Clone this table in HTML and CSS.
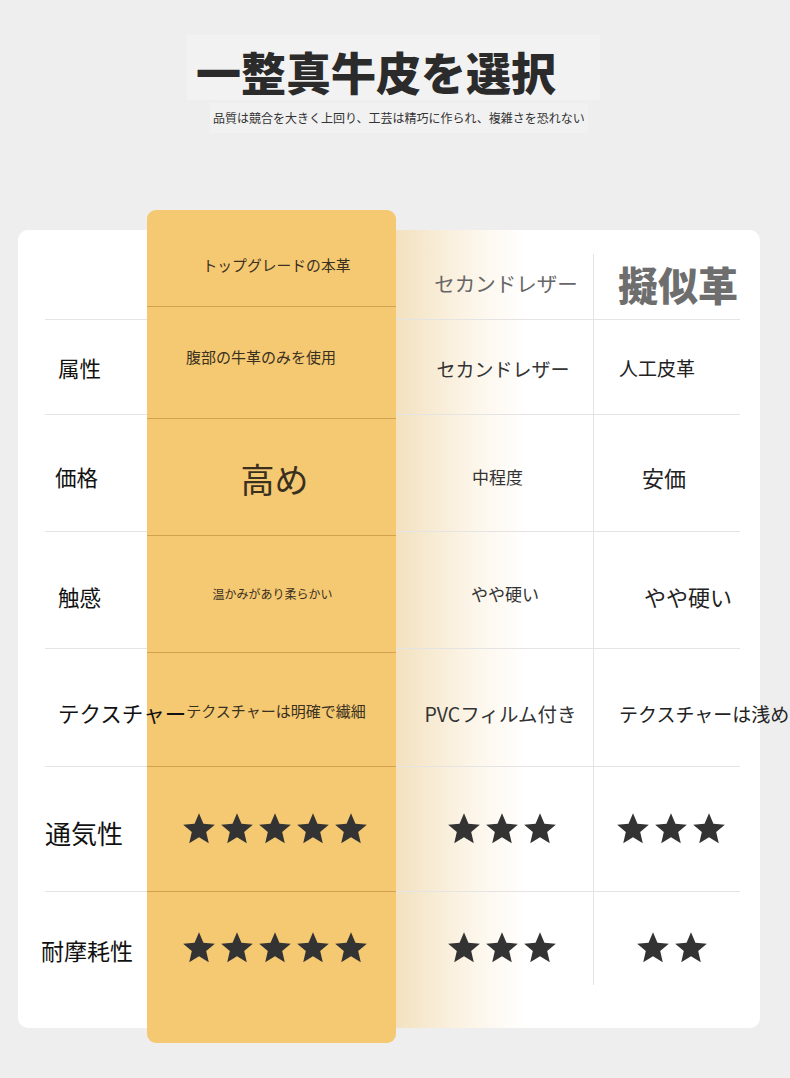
FILE: index.html
```html
<!DOCTYPE html>
<html lang="ja">
<head>
<meta charset="utf-8">
<title>一整真牛皮を選択</title>
<link rel="stylesheet" href="styles.css">
</head>
<body>
<div class="page">
  <header class="hero">
    <h1 class="title">一整真牛皮を選択</h1>
    <p class="subtitle">品質は競合を大きく上回り、工芸は精巧に作られ、複雑さを恐れない</p>
  </header>

  <section class="card">
    <div class="col col-label">
      <div class="cell h0"></div>
      <div class="cell h1 l1"><span class="label">属性</span></div>
      <div class="cell h2 l2"><span class="label">価格</span></div>
      <div class="cell h3 l3"><span class="label">触感</span></div>
      <div class="cell h4 l4"><span class="label">テクスチャー</span></div>
      <div class="cell h5 l5"><span class="label big">通気性</span></div>
      <div class="cell h6 last l6"><span class="label mid">耐摩耗性</span></div>
    </div>

    <div class="col col-top">
      <div class="tcell y0 t0"><span class="ttext">トップグレードの本革</span></div>
      <div class="tcell y1 t1"><span class="ttext">腹部の牛革のみを使用</span></div>
      <div class="tcell y2 t2"><span class="ttext huge">高め</span></div>
      <div class="tcell y3 t3"><span class="ttext small">温かみがあり柔らかい</span></div>
      <div class="tcell y4 t4"><span class="ttext">テクスチャーは明確で繊細</span></div>
      <div class="tcell y5 t5">
        <span class="stars">
          <svg class="star" viewBox="0 0 24 24"><path d="M12 17.27L18.18 21l-1.64-7.03L22 9.24l-7.19-.61L12 2 9.19 8.63 2 9.24l5.46 4.73L5.82 21z"/></svg>
          <svg class="star" viewBox="0 0 24 24"><path d="M12 17.27L18.18 21l-1.64-7.03L22 9.24l-7.19-.61L12 2 9.19 8.63 2 9.24l5.46 4.73L5.82 21z"/></svg>
          <svg class="star" viewBox="0 0 24 24"><path d="M12 17.27L18.18 21l-1.64-7.03L22 9.24l-7.19-.61L12 2 9.19 8.63 2 9.24l5.46 4.73L5.82 21z"/></svg>
          <svg class="star" viewBox="0 0 24 24"><path d="M12 17.27L18.18 21l-1.64-7.03L22 9.24l-7.19-.61L12 2 9.19 8.63 2 9.24l5.46 4.73L5.82 21z"/></svg>
          <svg class="star" viewBox="0 0 24 24"><path d="M12 17.27L18.18 21l-1.64-7.03L22 9.24l-7.19-.61L12 2 9.19 8.63 2 9.24l5.46 4.73L5.82 21z"/></svg>
        </span>
      </div>
      <div class="tcell y6 last t6">
        <span class="stars">
          <svg class="star" viewBox="0 0 24 24"><path d="M12 17.27L18.18 21l-1.64-7.03L22 9.24l-7.19-.61L12 2 9.19 8.63 2 9.24l5.46 4.73L5.82 21z"/></svg>
          <svg class="star" viewBox="0 0 24 24"><path d="M12 17.27L18.18 21l-1.64-7.03L22 9.24l-7.19-.61L12 2 9.19 8.63 2 9.24l5.46 4.73L5.82 21z"/></svg>
          <svg class="star" viewBox="0 0 24 24"><path d="M12 17.27L18.18 21l-1.64-7.03L22 9.24l-7.19-.61L12 2 9.19 8.63 2 9.24l5.46 4.73L5.82 21z"/></svg>
          <svg class="star" viewBox="0 0 24 24"><path d="M12 17.27L18.18 21l-1.64-7.03L22 9.24l-7.19-.61L12 2 9.19 8.63 2 9.24l5.46 4.73L5.82 21z"/></svg>
          <svg class="star" viewBox="0 0 24 24"><path d="M12 17.27L18.18 21l-1.64-7.03L22 9.24l-7.19-.61L12 2 9.19 8.63 2 9.24l5.46 4.73L5.82 21z"/></svg>
        </span>
      </div>
    </div>

    <div class="col col-mid">
      <div class="cell h0 m0"><span class="mtext head">セカンドレザー</span></div>
      <div class="cell h1 m1"><span class="mtext">セカンドレザー</span></div>
      <div class="cell h2 m2"><span class="mtext sm">中程度</span></div>
      <div class="cell h3 m3"><span class="mtext sm">やや硬い</span></div>
      <div class="cell h4 m4"><span class="mtext lg">PVCフィルム付き</span></div>
      <div class="cell h5 m5">
        <span class="stars">
          <svg class="star" viewBox="0 0 24 24"><path d="M12 17.27L18.18 21l-1.64-7.03L22 9.24l-7.19-.61L12 2 9.19 8.63 2 9.24l5.46 4.73L5.82 21z"/></svg>
          <svg class="star" viewBox="0 0 24 24"><path d="M12 17.27L18.18 21l-1.64-7.03L22 9.24l-7.19-.61L12 2 9.19 8.63 2 9.24l5.46 4.73L5.82 21z"/></svg>
          <svg class="star" viewBox="0 0 24 24"><path d="M12 17.27L18.18 21l-1.64-7.03L22 9.24l-7.19-.61L12 2 9.19 8.63 2 9.24l5.46 4.73L5.82 21z"/></svg>
        </span>
      </div>
      <div class="cell h6 last m6">
        <span class="stars">
          <svg class="star" viewBox="0 0 24 24"><path d="M12 17.27L18.18 21l-1.64-7.03L22 9.24l-7.19-.61L12 2 9.19 8.63 2 9.24l5.46 4.73L5.82 21z"/></svg>
          <svg class="star" viewBox="0 0 24 24"><path d="M12 17.27L18.18 21l-1.64-7.03L22 9.24l-7.19-.61L12 2 9.19 8.63 2 9.24l5.46 4.73L5.82 21z"/></svg>
          <svg class="star" viewBox="0 0 24 24"><path d="M12 17.27L18.18 21l-1.64-7.03L22 9.24l-7.19-.61L12 2 9.19 8.63 2 9.24l5.46 4.73L5.82 21z"/></svg>
        </span>
      </div>
    </div>

    <div class="col col-right">
      <div class="rlist">
        <div class="cell r0"><span class="rtext title-r">擬似革</span></div>
        <div class="cell h1 r1"><span class="rtext">人工皮革</span></div>
        <div class="cell h2 r2"><span class="rtext xl">安価</span></div>
        <div class="cell h3 r3"><span class="rtext xl">やや硬い</span></div>
        <div class="cell h4 r4"><span class="rtext">テクスチャーは浅め</span></div>
        <div class="cell h5 r5">
          <span class="stars">
            <svg class="star" viewBox="0 0 24 24"><path d="M12 17.27L18.18 21l-1.64-7.03L22 9.24l-7.19-.61L12 2 9.19 8.63 2 9.24l5.46 4.73L5.82 21z"/></svg>
            <svg class="star" viewBox="0 0 24 24"><path d="M12 17.27L18.18 21l-1.64-7.03L22 9.24l-7.19-.61L12 2 9.19 8.63 2 9.24l5.46 4.73L5.82 21z"/></svg>
            <svg class="star" viewBox="0 0 24 24"><path d="M12 17.27L18.18 21l-1.64-7.03L22 9.24l-7.19-.61L12 2 9.19 8.63 2 9.24l5.46 4.73L5.82 21z"/></svg>
          </span>
        </div>
        <div class="cell r6 last">
          <span class="stars two">
            <svg class="star" viewBox="0 0 24 24"><path d="M12 17.27L18.18 21l-1.64-7.03L22 9.24l-7.19-.61L12 2 9.19 8.63 2 9.24l5.46 4.73L5.82 21z"/></svg>
            <svg class="star" viewBox="0 0 24 24"><path d="M12 17.27L18.18 21l-1.64-7.03L22 9.24l-7.19-.61L12 2 9.19 8.63 2 9.24l5.46 4.73L5.82 21z"/></svg>
          </span>
        </div>
      </div>
    </div>
  </section>
</div>
</body>
</html>
```

FILE: styles.css
```css
* { box-sizing: border-box; }

html, body {
  margin: 0;
  padding: 0;
  background: #eeeeee;
}

body {
  font-family: "Noto Sans CJK JP", "Noto Sans", sans-serif;
  color: #222;
}

.page {
  width: 790px;
  height: 1078px;
  overflow: hidden;
}

/* ---------- hero ---------- */
.hero {
  padding-top: 35px;
}

.title {
  margin: 0 0 0 187px;
  width: 413px;
  height: 65px;
  padding: 12px 0 0 9px;
  background: #f2f2f2;
  font-size: 45px;
  line-height: 50px;
  font-weight: 900;
  color: #2b2b2b;
  white-space: nowrap;
}

.subtitle {
  margin: 3px 0 0 210px;
  width: fit-content;
  padding: 6px 3px;
  background: #f1f1f1;
  font-size: 12px;
  line-height: 18px;
  color: #333;
  white-space: nowrap;
}

/* ---------- card ---------- */
.card {
  margin: 97px 0 0 18px;
  width: 742px;
  background: #fff;
  border-radius: 10px;
  display: flex;
  align-items: flex-start;
}

.col {
  display: flex;
  flex-direction: column;
  flex: none;
}

.cell {
  display: flex;
  align-items: center;
  border-bottom: 1px solid #e4e4e4;
  white-space: nowrap;
}

.cell.last { border-bottom: 0; }

.h0 { height: 90px; }
.h1 { height: 95px; }
.h2 { height: 117px; }
.h3 { height: 117px; }
.h4 { height: 118px; }
.h5 { height: 125px; }
.h6 { height: 136px; }

/* label column */
.col-label {
  width: 129px;
  padding-left: 27px;
}

.label {
  position: relative;
  z-index: 2;
  font-size: 21.5px;
  line-height: 1.2;
  color: #111;
}

.label.big { font-size: 26px; }
.label.mid { font-size: 23px; }

.l1 { padding: 2px 0 0 13px; }
.l2 { padding: 8px 0 0 10px; }
.l3 { padding: 14px 0 0 13px; }
.l4 { padding: 11px 0 0 13px; }
.l5 { padding: 8px 0 0 0; }
.l6 { padding: 0 0 18px 0; margin-left: -4px; }

/* highlighted column */
.col-top {
  width: 249px;
  margin: -20px 0 -15px;
  background: #f5c872;
  border-radius: 9px;
}

.tcell {
  display: flex;
  align-items: center;
  justify-content: center;
  border-bottom: 1px solid rgba(160, 110, 30, 0.42);
  white-space: nowrap;
}

.tcell.last { border-bottom: 0; }

.y0 { height: 97px; }
.y1 { height: 112px; }
.y2 { height: 117px; }
.y3 { height: 117px; }
.y4 { height: 114px; }
.y5 { height: 125px; }
.y6 { height: 151px; }

.ttext {
  font-size: 15px;
  line-height: 1.2;
  color: #3a301f;
}

.ttext.huge { font-size: 34px; }
.ttext.small { font-size: 12px; }

.t0 { padding: 13px 0 0 10px; }
.t0 .ttext { font-size: 14.8px; }
.t1 { padding: 0 21px 11px 0; }
.t2 { padding: 4px 0 0 6px; }
.t3 { padding: 0 0 0 2px; }
.t4 { padding: 3px 0 0 9px; }
.t5 { padding: 0 0 0 6px; }
.t6 { padding: 0 0 39px 6px; }

/* middle column */
.col-mid {
  width: 197px;
  background: linear-gradient(90deg, #f3e1c0 0, #f8ecd6 40px, #fdf8ef 90px, #ffffff 130px);
}

.col-mid .cell { justify-content: center; }

.mtext {
  font-size: 19px;
  line-height: 1.2;
  color: #333;
}

.mtext.head { font-size: 20.5px; color: #666; }
.mtext.sm { font-size: 17px; }
.mtext.lg { font-size: 19.5px; }

.m0 { padding: 18px 0 0 23px; }
.m1 { padding: 4px 0 0 17px; }
.m2 { padding: 8px 0 0 6px; }
.m3 { padding: 8px 0 0 21px; }
.m4 { padding: 13px 0 0 12px; }
.m5 { padding: 0 0 0 14px; }
.m6 { padding: 0 0 24px 14px; }

/* right column */
.col-right {
  width: 167px;
  padding: 24px 20px 0 0;
}

.rlist {
  border-left: 1px solid #e4e4e4;
  display: flex;
  flex-direction: column;
}

.r0 { height: 66px; padding: 0 0 5px 24px; }
.r1 { padding: 2px 0 0 25px; }
.r2 { padding: 8px 0 0 48px; }
.r3 { padding: 12px 0 0 50px; }
.r4 { padding: 13px 0 0 25px; }
.r5 { padding: 0 0 0 20px; }
.r6 { height: 93px; padding: 19px 0 0 40px; }

.rtext {
  font-size: 19px;
  line-height: 1.2;
  color: #222;
}

.rtext.xl { font-size: 22px; }

.rtext.title-r {
  font-size: 40px;
  font-weight: 900;
  color: #6e6e6e;
}

/* stars */
.stars {
  display: flex;
  gap: 0;
}

.stars.two { gap: 0; }

.star {
  width: 38px;
  height: 38px;
  fill: #333;
  display: block;
}
```
